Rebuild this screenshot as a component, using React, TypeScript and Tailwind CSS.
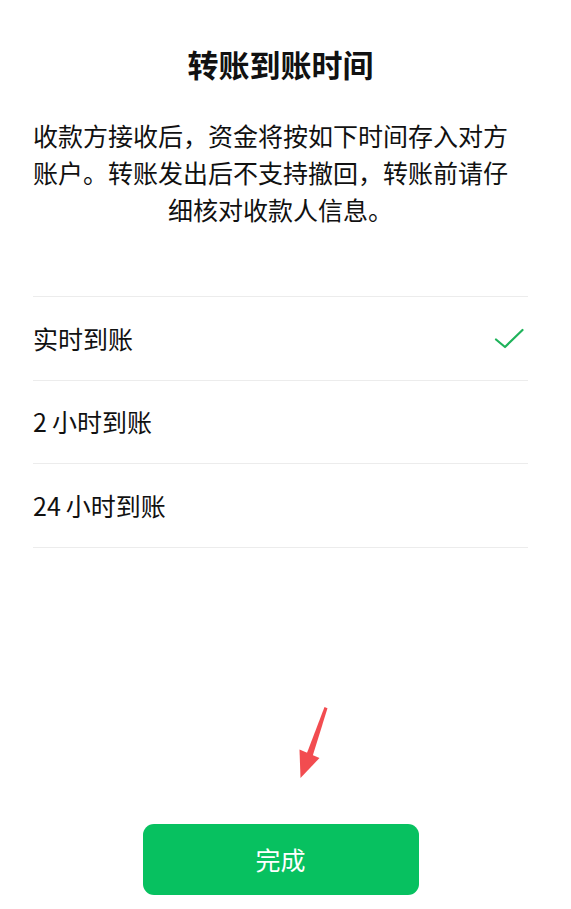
import { useState } from "react";

const options = [
  { num: "", label: "实时到账" },
  { num: "2", label: "小时到账" },
  { num: "24", label: "小时到账" },
];

export default function App() {
  const [selected, setSelected] = useState(0);

  return (
    <div
      className="relative flex h-[909px] w-full flex-col bg-white pl-[33px] pr-[43px] text-[#111111]"
      style={{ fontFamily: '"Noto Sans CJK SC", "Noto Sans", sans-serif' }}
    >
      <h1 className="mt-[44px] text-center text-[31px] font-bold leading-[40px]">
        转账到账时间
      </h1>

      <p className="mt-[33px] text-left text-[25px] leading-[37px] [text-align-last:center]">
        收款方接收后，资金将按如下时间存入对方账户。转账发出后不支持撤回，转账前请仔细核对收款人信息。
      </p>

      {/* 到账时间选项 */}
      <ul className="mt-[68px] border-t border-[#ececec]">
        {options.map((opt, i) => (
          <li
            key={i}
            onClick={() => setSelected(i)}
            className="flex h-[83.7px] cursor-pointer items-center justify-between border-b border-[#ececec] text-[25px]"
          >
            <span>
              {opt.num && <span className="mr-[5px]">{opt.num}</span>}
              {opt.label}
            </span>
            {selected === i && (
              <svg width="32" height="24" viewBox="0 0 32 24" className="mr-[3px]">
                <path
                  d="M3 13.5 L12 21 L29.5 4"
                  fill="none"
                  stroke="#1fb35b"
                  strokeWidth="2.2"
                  strokeLinecap="round"
                  strokeLinejoin="round"
                />
              </svg>
            )}
          </li>
        ))}
      </ul>

      <div className="mt-auto mb-[14px] flex justify-center">
        <button className="h-[71px] w-[276px] rounded-[11px] bg-[#07c160] text-[25px] font-normal text-white">
          完成
        </button>
      </div>

      {/* 标注箭头 */}
      <svg
        className="pointer-events-none absolute left-[290px] top-[700px]"
        width="45"
        height="85"
        viewBox="0 0 45 85"
      >
        <path d="M34.5 7 L37.5 8.2 L22 58 L16 55.5 Z" fill="#f24c50" />
        <path d="M10.5 78 L9.5 49.5 L29.5 58 Z" fill="#f24c50" />
      </svg>
    </div>
  );
}
